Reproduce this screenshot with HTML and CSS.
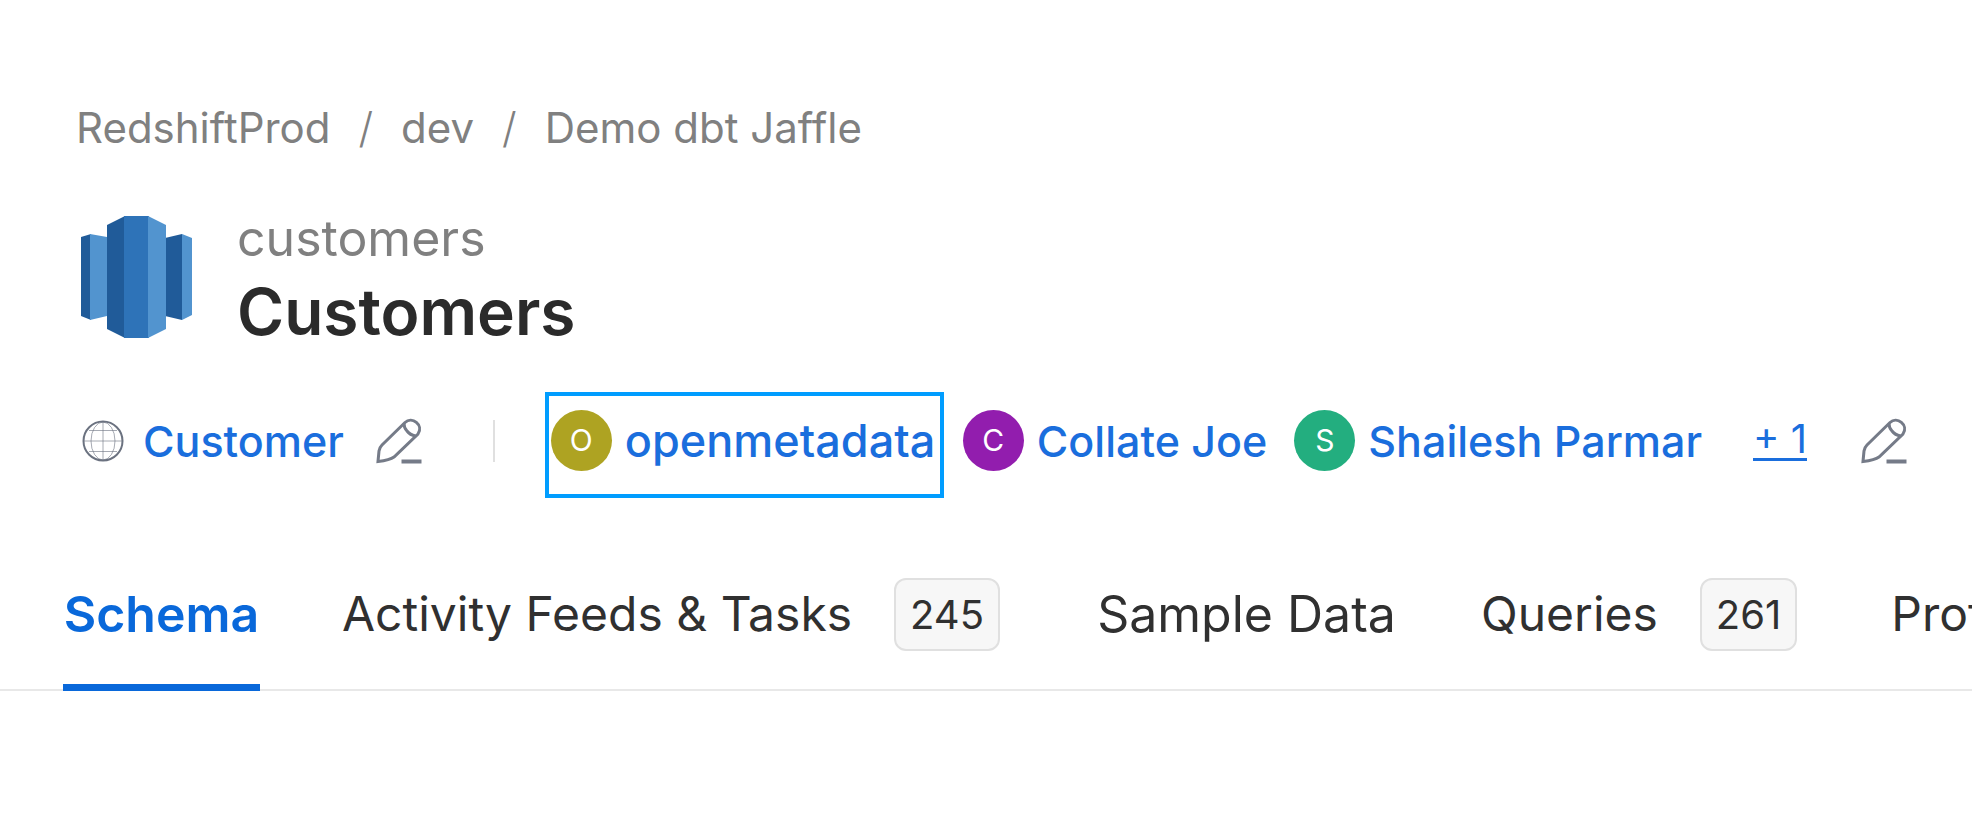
FILE: index.html
```html
<!DOCTYPE html>
<html lang="en">
<head>
<meta charset="utf-8">
<title>Customers</title>
<link rel="stylesheet" href="styles.css">
</head>
<body>
<svg class="sprite" aria-hidden="true">
  <symbol id="pencil" viewBox="0 0 46 46">
    <g fill="none" stroke="#757b88" stroke-width="3">
      <path d="M2 43.500 L3 33 Q3.500 29.500 6 27 L29 4.500 C36 -2 48 7 42 16 L18 39 Q14 42 2 43.500Z"/>
      <path d="M28 5.500 Q28 10 31 13 Q34 17 39.500 18"/>
      <path d="M25.500 43.500H45.500" stroke-width="4"/>
    </g>
  </symbol>
</svg>
<header class="entity">
  <nav class="breadcrumb" aria-label="Breadcrumb">
    <a href="#">RedshiftProd</a><span class="slash">/</span><a href="#">dev</a><span class="slash">/</span><a href="#">Demo dbt Jaffle</a>
  </nav>
  <div class="title">
    <svg class="logo" viewBox="0 0 112 122" aria-hidden="true">
      <path fill="#205b99" d="M0 21 10 18V104L0 100Z"/>
      <path fill="#5294cf" d="M9 18 26 21V100L9 104Z"/>
      <path fill="#205b99" d="M84 22 101 18V104L84 100Z"/>
      <path fill="#5294cf" d="M101 18 111 22V99L101 104Z"/>
      <path fill="#205b99" d="M26 9 44 0V122L26 113Z"/>
      <path fill="#2e73b8" d="M43 0H68V122H43Z"/>
      <path fill="#5294cf" d="M67 0 85 9V113L67 122Z"/>
    </svg>
    <div class="names">
      <p class="name">customers</p>
      <h1 class="display-name">Customers</h1>
    </div>
  </div>
  <div class="meta">
    <svg class="globe" viewBox="0 0 42 42" aria-hidden="true">
      <g fill="none" stroke="#6b7280">
        <circle cx="21" cy="21" r="19.500" stroke-width="2"/>
        <path d="M21 2V40M2 21H40M7 10.500H35M7 31.500H35" opacity=".6"/>
        <ellipse cx="21" cy="21" rx="12" ry="19" opacity=".6"/>
      </g>
    </svg>
    <a class="domain" href="#">Customer</a>
    <button class="edit" aria-label="Edit domain"><svg viewBox="0 0 46 46"><use href="#pencil"/></svg></button>
    <span class="divider"></span>
    <div class="owners">
      <a class="owner selected" href="#"><span class="avatar olive">O</span>openmetadata</a>
      <a class="owner" href="#"><span class="avatar purple">C</span>Collate Joe</a>
      <a class="owner" href="#"><span class="avatar green">S</span>Shailesh Parmar</a>
    </div>
    <button class="more">+ 1</button>
    <button class="edit" aria-label="Edit owners"><svg viewBox="0 0 46 46"><use href="#pencil"/></svg></button>
  </div>
</header>
<div class="tabs" role="tablist">
  <button class="tab active" role="tab" aria-selected="true">Schema</button>
  <button class="tab" role="tab">Activity Feeds &amp; Tasks<span class="count">245</span></button>
  <button class="tab sample" role="tab">Sample Data</button>
  <button class="tab" role="tab">Queries<span class="count">261</span></button>
  <button class="tab" role="tab">Profiler</button>
</div>
</body>
</html>
```
FILE: styles.css
```css
* { box-sizing: border-box; }
body {
  margin: 0;
  background: #fff;
  color: #303030;
  font-family: Inter, "Open Sans", sans-serif;
  overflow-x: hidden;
}
a { color: inherit; text-decoration: none; }
button { border: 0; padding: 0; background: none; color: inherit; font: inherit; cursor: pointer; }
svg { display: block; }
.sprite { position: absolute; width: 0; height: 0; }

.entity { padding: 98px 0 0 76px; }
.breadcrumb {
  display: flex;
  gap: 28px;
  font-size: 42px;
  line-height: 60px;
  color: #808080;
}
.slash { font-weight: 300; }
.title { display: flex; gap: 44px; padding: 56px 0 0 5px; }
.logo { width: 112px; height: 122px; margin-top: 2px; }
.name, .display-name { margin: 0; }
.name { font-size: 50px; line-height: 48px; color: #808080; }
.display-name { font-size: 64px; line-height: 72px; margin-top: 14px; font-weight: 600; color: #2b2b2b; }

.meta {
  display: flex;
  align-items: center;
  margin-top: 62px;
  padding-left: 6px;
  font-size: 43px;
  line-height: 58px;
  font-weight: 500;
  color: #1a6edd;
  white-space: nowrap;
}
.meta > * { flex-shrink: 0; }
.globe { width: 42px; height: 42px; margin-right: 19px; }
.edit svg { width: 46px; height: 46px; }
.domain { margin-right: 32px; }
.divider { width: 2px; height: 42px; margin: 0 50px 0 71px; background: #e0e0e0; }
.owners { display: flex; align-items: flex-start; gap: 27px; }
.owner { display: flex; align-items: center; gap: 13px; }
.selected {
  min-width: 399px;
  margin: -18px -8px -27px 0;
  padding: 14px 2px 23px;
  border: 4px solid #009dff;
  font-size: 45px;
}
.avatar {
  width: 61px;
  height: 61px;
  border-radius: 50%;
  color: #fff;
  font-size: 30px;
  font-weight: 400;
  line-height: 61px;
  text-align: center;
}
.olive { background: #aea322; }
.purple { background: #921dae; }
.green { background: #23ae7f; }
.more {
  margin: 0 54px 0 51px;
  border-bottom: 3px solid #1a6edd;
  font-size: 40px;
  font-weight: 400;
  line-height: 38px;
}

.tabs {
  display: flex;
  gap: 82px;
  margin-top: 89px;
  padding-left: 63px;
  border-bottom: 2px solid #e8e8e8;
  font-size: 48px;
  line-height: 72px;
  white-space: nowrap;
}
.tab {
  display: flex;
  flex-shrink: 0;
  align-items: center;
  justify-content: center;
  gap: 42px;
  height: 131px;
  margin-bottom: -2px;
  padding-bottom: 16px;
  border-bottom: 7px solid transparent;
}
.active { min-width: 197px; color: #0968da; font-size: 50px; font-weight: 600; border-bottom-color: #0968da; }
.sample { min-width: 305px; font-size: 50px; }
.count {
  margin-right: 12px;
  padding: 0 14px;
  border: 2px solid #e0e0e0;
  border-radius: 12px;
  background: #f7f7f7;
  font-size: 40px;
  line-height: 69px;
}
```
